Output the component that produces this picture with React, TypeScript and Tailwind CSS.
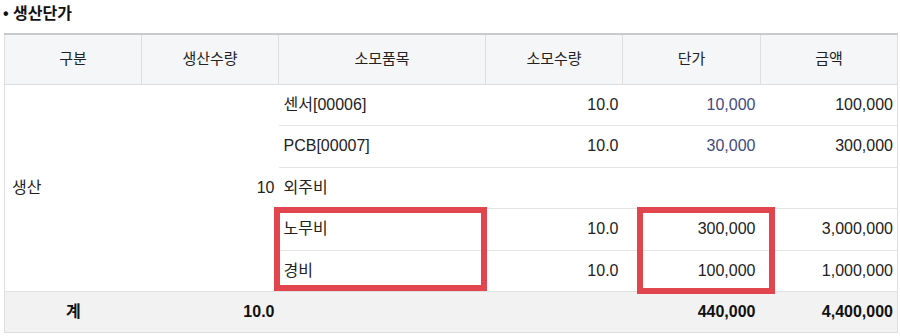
import React from "react";

const font = { fontFamily: '"Liberation Sans", "Noto Sans CJK KR", sans-serif' };

type Row = { item: string; qty?: string; price?: string; priceBlue?: boolean; amount?: string };

const rows: Row[] = [
  { item: "센서[00006]", qty: "10.0", price: "10,000", priceBlue: true, amount: "100,000" },
  { item: "PCB[00007]", qty: "10.0", price: "30,000", priceBlue: true, amount: "300,000" },
  { item: "외주비" },
  { item: "노무비", qty: "10.0", price: "300,000", amount: "3,000,000" },
  { item: "경비", qty: "10.0", price: "100,000", amount: "1,000,000" },
];

export default function App() {
  return (
    <div className="relative w-[900px] h-[336px] bg-white text-[#222]" style={font}>
      <div className="h-[33px] pl-[3px] pt-[3px] text-[16px] font-bold leading-[22px] text-[#111]">
        • 생산단가
      </div>
      <div className="pl-[4px]">
        <table className="w-[893px] table-fixed border-collapse border-x border-b border-[#dedede] text-[16px]">
          <colgroup>
            <col className="w-[137px]" />
            <col className="w-[137px]" />
            <col className="w-[207px]" />
            <col className="w-[137px]" />
            <col className="w-[138px]" />
            <col className="w-[137px]" />
          </colgroup>
          <thead>
            <tr className="h-[50px] bg-[#f5f6f7] border-t-2 border-t-[#c8cacd] border-b border-b-[#dcdcdc]">
              {["구분", "생산수량", "소모품목", "소모수량", "단가", "금액"].map((h, i) => (
                <th
                  key={h}
                  className={`font-normal text-center text-[15px] text-[#222] ${i < 5 ? "border-r border-[#dedede]" : ""}`}
                >
                  {h}
                </th>
              ))}
            </tr>
          </thead>
          <tbody>
            {rows.map((r, i) => (
              <tr key={r.item} className="h-[41.5px]">
                {i === 0 && (
                  <>
                    <td rowSpan={5} className="pl-[7px] align-middle text-left">
                      생산
                    </td>
                    <td rowSpan={5} className="pr-[4px] align-middle text-right">
                      10
                    </td>
                  </>
                )}
                <td className={`pl-[5px] text-left ${i < 4 ? "border-b border-[#e4e4e4]" : ""}`}>{r.item}</td>
                <td className={`pr-[4px] text-right ${i < 4 ? "border-b border-[#e4e4e4]" : ""}`}>{r.qty ?? ""}</td>
                <td
                  className={`pr-[5px] text-right ${r.priceBlue ? "text-[#3f4a80]" : ""} ${i < 4 ? "border-b border-[#e4e4e4]" : ""}`}
                >
                  {r.price ?? ""}
                </td>
                <td className={`pr-[4px] text-right ${i < 4 ? "border-b border-[#e4e4e4]" : ""}`}>{r.amount ?? ""}</td>
              </tr>
            ))}
            <tr className="h-[41px] bg-[#f2f2f2] border-t border-[#e0e0e0] font-bold text-[#111]">
              <td className="text-center">계</td>
              <td className="pr-[4px] text-right">10.0</td>
              <td></td>
              <td></td>
              <td className="pr-[5px] text-right">440,000</td>
              <td className="pr-[4px] text-right">4,400,000</td>
            </tr>
          </tbody>
        </table>
      </div>
      <div className="absolute left-[274px] top-[207px] w-[213px] h-[84px] border-[6px] border-[#e1464e]" />
      <div className="absolute left-[637px] top-[207px] w-[138px] h-[87px] border-[6px] border-[#e1464e]" />
    </div>
  );
}
